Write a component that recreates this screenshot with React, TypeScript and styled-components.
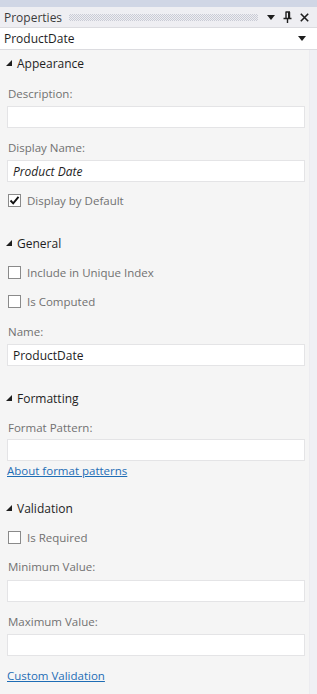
import styled, { createGlobalStyle } from 'styled-components'

const GlobalStyle = createGlobalStyle`
  html, body {
    margin: 0;
    padding: 0;
    background: #f5f5f5;
  }
  body {
    font-family: 'Open Sans', 'Noto Sans', sans-serif;
    font-size: 11.5px;
  }
`

type FieldProps = {
  label: string
  value?: string
  italic?: boolean
  top: number
  inputTop?: number
}

type CheckProps = {
  label: string
  checked?: boolean
  top: number
}

const SectionArrow = () => (
  <svg width='6' height='6' viewBox='0 0 6 6'>
    <polygon points='6,0 6,6 0,6' fill='#1e1e1e' />
  </svg>
)

const Field = ({ label, value, italic, top, inputTop = 4 }: FieldProps) => (
  <StyledField $top={top}>
    <StyledLabel>{label}</StyledLabel>
    <StyledInput $top={inputTop} $italic={italic}>
      {value}
    </StyledInput>
  </StyledField>
)

const Check = ({ label, checked, top }: CheckProps) => (
  <StyledCheckRow $top={top}>
    <StyledBox>
      {checked && (
        <svg width='11' height='11' viewBox='0 0 11 11'>
          <path d='M1.5 5.5 L4.2 8.3 L9.5 1.8' stroke='#111' strokeWidth='1.9' fill='none' />
        </svg>
      )}
    </StyledBox>
    <StyledCheckLabel>{label}</StyledCheckLabel>
  </StyledCheckRow>
)

const Header = ({ title, top }: { title: string; top: number }) => (
  <StyledHeader $top={top}>
    <SectionArrow />
    <span>{title}</span>
  </StyledHeader>
)

const App = () => {
  return (
    <>
      <GlobalStyle />
      <StyledPanel>
        <StyledTopBand />
        <StyledTitleBar>
          <StyledTitle>Properties</StyledTitle>
          <StyledGrip />
          <StyledTitleIcons>
            <svg width='8' height='5' viewBox='0 0 8 5'>
              <polygon points='0,0 8,0 4,5' fill='#1e1e1e' />
            </svg>
            <svg width='9' height='12' viewBox='0 0 9 12'>
              <path d='M2.5 1 H7 M3 1 V7 M6.5 1 V7 M0.5 7.5 H8.5 M4.5 7.5 V12' stroke='#1e1e1e' strokeWidth='1.4' fill='none' />
              <rect x='5' y='1' width='1.5' height='6' fill='#1e1e1e' />
            </svg>
            <svg width='9' height='9' viewBox='0 0 9 9'>
              <path d='M0.8 0.8 L8.2 8.2 M8.2 0.8 L0.8 8.2' stroke='#1e1e1e' strokeWidth='1.6' />
            </svg>
          </StyledTitleIcons>
        </StyledTitleBar>
        <StyledSelect>
          <span>ProductDate</span>
          <svg width='8' height='5' viewBox='0 0 8 5'>
            <polygon points='0,0 8,0 4,5' fill='#1e1e1e' />
          </svg>
        </StyledSelect>

        <StyledBody>
          <StyledScrollArea>
            <Header title='Appearance' top={5} />
            <Field label='Description:' top={15} />
            <Field label='Display Name:' value='Product Date' italic top={12} />
            <Check label='Display by Default' checked top={10} />

            <Header title='General' top={27} />
            <Check label='Include in Unique Index' top={13} />
            <Check label='Is Computed' top={13} />
            <Field label='Name:' value='ProductDate' top={15} />

            <Header title='Formatting' top={24} />
            <Field label='Format Pattern:' top={14} inputTop={3} />
            <StyledLink $top={2}>About format patterns</StyledLink>

            <Header title='Validation' top={21} />
            <Check label='Is Required' top={13} />
            <Field label='Minimum Value:' top={14} inputTop={5} />
            <Field label='Maximum Value:' top={12} inputTop={4} />
            <StyledLink $top={12}>Custom Validation</StyledLink>
          </StyledScrollArea>
          <StyledScrollStrip />
        </StyledBody>
      </StyledPanel>
    </>
  )
}

export default App

const StyledPanel = styled.div`
  width: 317px;
  height: 694px;
  display: flex;
  flex-direction: column;
  overflow: hidden;
  background: #f5f5f5;
`

const StyledTopBand = styled.div`
  height: 7px;
  background: #d0d6e5;
`

const StyledTitleBar = styled.div`
  height: 20px;
  display: flex;
  align-items: center;
  padding: 0 8px 0 4px;
  background: #eeeef2;
`

const StyledTitle = styled.span`
  color: #3c3c3c;
  font-size: 12px;
`

const StyledGrip = styled.div`
  flex: 1;
  height: 7px;
  margin: 1px 9px 0 7px;
  background: repeating-conic-gradient(#c9cbd5 0 25%, transparent 0 50%) 0 0 / 2px 2px;
`

const StyledTitleIcons = styled.div`
  display: flex;
  align-items: center;
  gap: 8px;
`

const StyledSelect = styled.div`
  height: 21px;
  display: flex;
  align-items: center;
  justify-content: space-between;
  padding: 0 11px 0 4px;
  background: #fff;
  border-top: 1px solid #dcdce0;
  border-bottom: 1px solid #dcdce0;
  color: #1e1e1e;
  font-size: 12px;
`

const StyledBody = styled.div`
  flex: 1;
  display: flex;
`

const StyledScrollArea = styled.div`
  flex: 1;
  display: flex;
  flex-direction: column;
  padding: 0 4px 0 7px;
`

const StyledScrollStrip = styled.div`
  width: 7px;
  background: #f0f0f4;
  border-left: 1px solid #ececf0;
`

const StyledHeader = styled.div<{ $top: number }>`
  margin-top: ${p => p.$top}px;
  height: 16px;
  display: flex;
  align-items: center;
  gap: 5px;
  color: #1e1e1e;
  font-size: 12px;

  svg {
    margin-left: -1px;
  }
`

const StyledField = styled.div<{ $top: number }>`
  margin-top: ${p => p.$top}px;
  display: flex;
  flex-direction: column;
`

const StyledLabel = styled.div`
  height: 16px;
  line-height: 16px;
  padding-left: 1px;
  color: #717171;
`

const StyledInput = styled.div<{ $top: number; $italic?: boolean }>`
  margin-top: ${p => p.$top}px;
  height: 22px;
  box-sizing: border-box;
  display: flex;
  align-items: center;
  padding: 0 5px;
  background: #fff;
  border: 1px solid #e4e4e6;
  color: #1e1e1e;
  font-size: 12px;
  font-style: ${p => (p.$italic ? 'italic' : 'normal')};
`

const StyledCheckRow = styled.div<{ $top: number }>`
  margin-top: ${p => p.$top}px;
  height: 16px;
  display: flex;
  align-items: center;
  gap: 6px;
  padding-left: 1px;
`

const StyledBox = styled.div`
  width: 13px;
  height: 13px;
  box-sizing: border-box;
  border: 1px solid #8a8a8a;
  background: #fff;
  display: flex;
  align-items: center;
  justify-content: center;
`

const StyledCheckLabel = styled.span`
  color: #717171;
`

const StyledLink = styled.a<{ $top: number }>`
  margin-top: ${p => p.$top}px;
  height: 16px;
  line-height: 16px;
  color: #1e6db5;
  text-decoration: underline;
  cursor: pointer;
  align-self: flex-start;
`
